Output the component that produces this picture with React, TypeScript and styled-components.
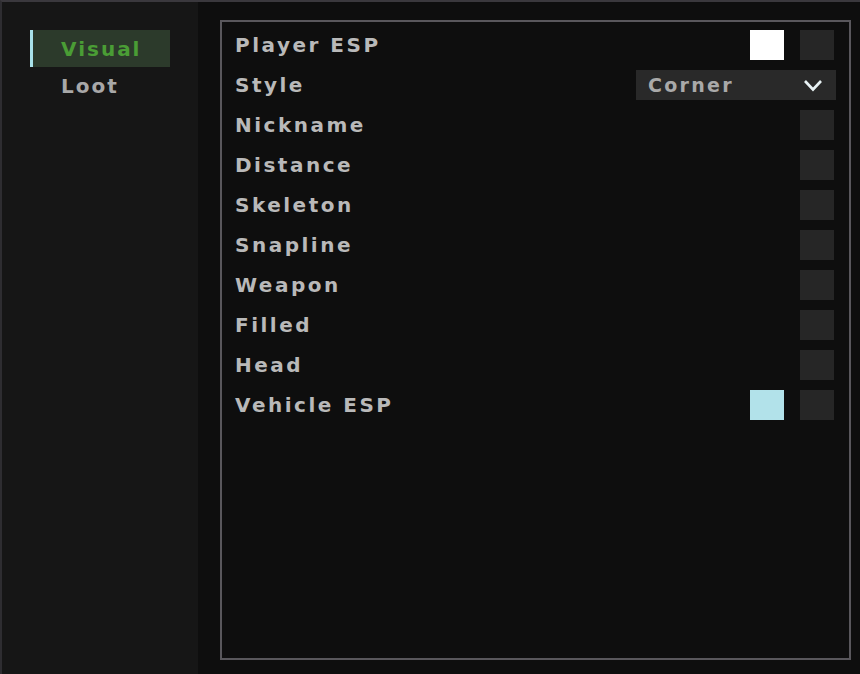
import React, { FC } from 'react';
import styled, { createGlobalStyle } from 'styled-components';

const GlobalStyle = createGlobalStyle`
  html, body {
    margin: 0;
    padding: 0;
    background: #0e0e0e;
  }
  #root {
    width: 860px;
    height: 674px;
  }
`;

interface Row {
  label: string;
  swatch?: string;
  select?: string;
}

const rows: Row[] = [
  { label: 'Player ESP', swatch: '#ffffff' },
  { label: 'Style', select: 'Corner' },
  { label: 'Nickname' },
  { label: 'Distance' },
  { label: 'Skeleton' },
  { label: 'Snapline' },
  { label: 'Weapon' },
  { label: 'Filled' },
  { label: 'Head' },
  { label: 'Vehicle ESP', swatch: '#b2e2ea' },
];

const Chevron: FC = () => (
  <svg width="20" height="13" viewBox="0 0 20 13">
    <path d="M2 2 L10 10.5 L18 2" fill="none" stroke="#e8f2f4" strokeWidth="2.6" />
  </svg>
);

const App: FC = () => {
  return (
    <>
      <GlobalStyle />
      <Window>
        <Sidebar>
          <Tab active>Visual</Tab>
          <Tab>Loot</Tab>
        </Sidebar>
        <Main>
          <Panel>
            {rows.map((row) => (
              <OptionRow key={row.label}>
                <Label>{row.label}</Label>
                {row.select ? (
                  <Select>
                    <span>{row.select}</span>
                    <Chevron />
                  </Select>
                ) : (
                  <Controls>
                    {row.swatch && <Swatch color={row.swatch} />}
                    <Checkbox />
                  </Controls>
                )}
              </OptionRow>
            ))}
          </Panel>
        </Main>
      </Window>
    </>
  );
};

const Window = styled.div`
  width: 860px;
  height: 674px;
  box-sizing: border-box;
  display: flex;
  border-top: 2px solid #3a383d;
  border-left: 2px solid #2e2d31;
  background: #0e0e0e;
  font-family: 'DejaVu Sans', sans-serif;
`;

const Sidebar = styled.div`
  width: 196px;
  flex-shrink: 0;
  background: #161616;
  padding: 28px 0 0 28px;
  box-sizing: border-box;
  display: flex;
  flex-direction: column;
`;

const Tab = styled.div<{ active?: boolean }>`
  width: 140px;
  height: 37px;
  box-sizing: border-box;
  display: flex;
  align-items: center;
  padding-left: 28px;
  font-size: 20px;
  font-weight: bold;
  letter-spacing: 2px;
  color: ${(p) => (p.active ? '#4a9d35' : '#a8a8a8')};
  background: ${(p) => (p.active ? '#2c3a2b' : 'transparent')};
  border-left: 3px solid ${(p) => (p.active ? '#a9e2ea' : 'transparent')};
`;

const Main = styled.div`
  flex: 1;
  padding: 18px 9px 14px 22px;
  box-sizing: border-box;
  display: flex;
`;

const Panel = styled.div`
  flex: 1;
  border: 2px solid #59575c;
  background: #0e0e0e;
  padding: 3px 15px 0 13px;
  display: flex;
  flex-direction: column;
`;

const OptionRow = styled.div`
  height: 40px;
  display: flex;
  align-items: center;
  justify-content: space-between;
`;

const Label = styled.span`
  font-size: 20px;
  font-weight: bold;
  letter-spacing: 2.5px;
  color: #b9b9b9;
`;

const Controls = styled.div`
  display: flex;
  align-items: center;
  gap: 16px;
`;

const Swatch = styled.div<{ color: string }>`
  width: 34px;
  height: 30px;
  background: ${(p) => p.color};
`;

const Checkbox = styled.div`
  width: 34px;
  height: 30px;
  background: #262626;
`;

const Select = styled.div`
  width: 200px;
  height: 30px;
  margin-right: -2px;
  box-sizing: border-box;
  background: #292929;
  display: flex;
  align-items: center;
  justify-content: space-between;
  padding: 0 13px 0 12px;
  font-size: 19px;
  font-weight: bold;
  letter-spacing: 2.3px;
  color: #a9a9a9;
`;

export default App;
